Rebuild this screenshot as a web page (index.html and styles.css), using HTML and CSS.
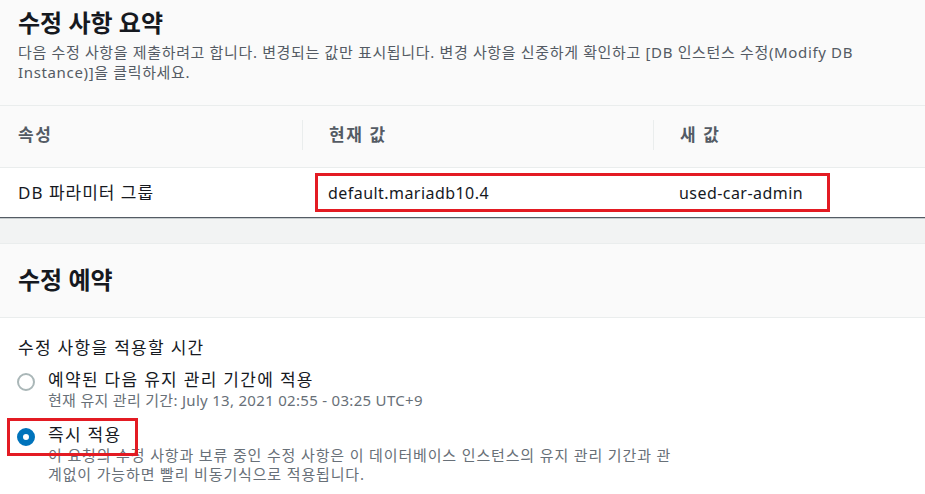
FILE: index.html
```html
<!DOCTYPE html>
<html lang="ko">
<head>
<meta charset="utf-8">
<link rel="stylesheet" href="styles.css">
</head>
<body>
<section class="panel summary">
  <header class="panel-header">
    <h2 class="panel-title">수정 사항 요약</h2>
    <p class="panel-desc">다음 수정 사항을 제출하려고 합니다. 변경되는 값만 표시됩니다. 변경 사항을 신중하게 확인하고 [DB 인스턴스 수정(Modify DB Instance)]을 클릭하세요.</p>
  </header>
  <div class="table">
    <div class="row head">
      <div class="cell first">속성</div>
      <div class="cell divided">현재 값</div>
      <div class="cell divided">새 값</div>
    </div>
    <div class="row data">
      <div class="cell first ko">DB 파라미터 그룹</div>
      <div class="cell latin">default.mariadb10.4</div>
      <div class="cell latin">used-car-admin</div>
      <div class="highlight hl-row"></div>
    </div>
  </div>
</section>
<section class="panel schedule">
  <header class="panel-header compact">
    <h2 class="panel-title">수정 예약</h2>
  </header>
  <div class="panel-body">
    <div class="field-label">수정 사항을 적용할 시간</div>
    <div class="radio-group">
      <div class="radio-item">
        <span class="radio"></span>
        <div class="radio-text">
          <div class="radio-label">예약된 다음 유지 관리 기간에 적용</div>
          <div class="radio-desc">현재 유지 관리 기간: July 13, 2021 02:55 - 03:25 UTC+9</div>
        </div>
      </div>
      <div class="radio-item">
        <span class="radio checked"></span>
        <div class="radio-text">
          <div class="radio-label">즉시 적용</div>
          <div class="radio-desc wrap">이 요청의 수정 사항과 보류 중인 수정 사항은 이 데이터베이스 인스턴스의 유지 관리 기간과 관계없이 가능하면 빨리 비동기식으로 적용됩니다.</div>
        </div>
        <div class="highlight hl-radio"></div>
      </div>
    </div>
  </div>
</section>
</body>
</html>
```

FILE: styles.css
```css
* { box-sizing: border-box; }
html, body { margin: 0; padding: 0; }
body {
  width: 925px;
  height: 494px;
  overflow: hidden;
  background: #f2f3f3;
  font-family: "Noto Sans", "Noto Sans CJK KR", sans-serif;
  color: #16191f;
}
.panel {
  background: #ffffff;
}
.summary {
  box-shadow: 0 1px 0 0 #545b64, 0 2px 0 0 #c6ccce;
  margin-bottom: 26px;
}
.schedule {
  border-top: 1px solid #eaeded;
  min-height: 260px;
}
.panel-header {
  background: #fafafa;
  padding: 8px 18px 23px;
  border-bottom: 1px solid #eaeded;
}
.panel-header.compact {
  padding: 21px 18px 22px;
}
.panel-title {
  margin: 0;
  font-size: 24px;
  line-height: 30px;
  font-weight: 700;
  color: #16191f;
}
.panel-desc {
  margin: 4px 0 0;
  font-size: 15px;
  line-height: 20px;
  letter-spacing: 0.65px;
  color: #545b64;
}
.table { background: #fff; }
.row {
  display: grid;
  grid-template-columns: 302px 351px 1fr;
  position: relative;
}
.row.head {
  background: #fafafa;
  height: 62px;
  padding-bottom: 3px;
  border-bottom: 1px solid #eaeded;
  align-items: center;
}
.row.head .cell {
  font-size: 17px;
  font-weight: 700;
  letter-spacing: 1.6px;
  color: #545b64;
}
.row.data {
  height: 49px;
  align-items: center;
}
.cell {
  padding-left: 26px;
  font-size: 16px;
  line-height: 22px;
  color: #16191f;
}
.cell.first { padding-left: 18px; }
.cell.ko {
  font-size: 17px;
  letter-spacing: 1px;
}
.cell.latin { letter-spacing: 0.45px; }
.row.head .cell.divided {
  height: 30px;
  display: flex;
  align-items: center;
  border-left: 1px solid #eaeded;
}
.panel-body {
  padding: 18px 18px 20px;
}
.field-label {
  font-size: 17px;
  line-height: 24px;
  letter-spacing: 1.3px;
  color: #16191f;
}
.radio-group {
  margin-top: 9px;
  display: flex;
  flex-direction: column;
  gap: 14px;
}
.radio-item {
  display: flex;
  align-items: flex-start;
  gap: 13px;
  position: relative;
}
.radio {
  flex: none;
  width: 18px;
  height: 18px;
  margin-left: -1px;
  margin-top: 4px;
  border-radius: 50%;
  border: 2px solid #aab7b8;
  background: #fff;
}
.radio.checked {
  border: 6px solid #0073bb;
}
.radio-label {
  font-size: 17px;
  line-height: 22px;
  letter-spacing: 1.3px;
  color: #16191f;
}
.radio-desc {
  font-size: 15px;
  line-height: 19px;
  letter-spacing: 0.3px;
  color: #687078;
}
.radio-desc.wrap {
  width: 630px;
  letter-spacing: 0.85px;
}
.highlight {
  position: absolute;
  border: 3px solid #e31b23;
  pointer-events: none;
}
.hl-row {
  left: 315px;
  top: 5px;
  width: 515px;
  height: 39px;
}
.hl-radio {
  left: -11px;
  top: -6px;
  width: 131px;
  height: 38px;
}
```
